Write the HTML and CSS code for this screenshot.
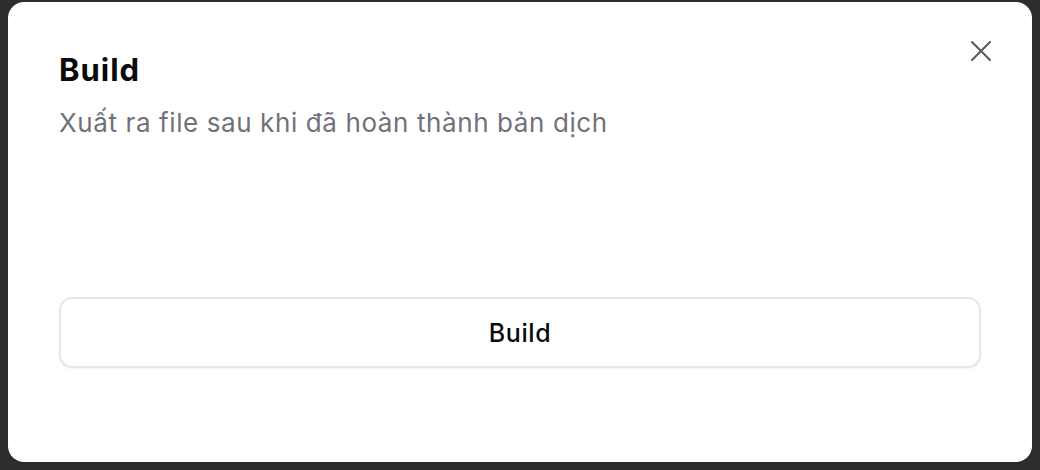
FILE: index.html
```html
<!DOCTYPE html>
<html lang="vi">
<head>
<meta charset="utf-8">
<link rel="stylesheet" href="styles.css">
</head>
<body>
<div class="modal">
  <button class="close" aria-label="Close">
    <svg width="24" height="24" viewBox="0 0 24 24" fill="none" stroke="currentColor" stroke-width="2" stroke-linecap="round"><path d="M3 3L21 21M21 3L3 21"/></svg>
  </button>
  <h2 class="title">Build</h2>
  <p class="desc">Xuất ra file sau khi đã hoàn thành bản dịch</p>
  <button class="build">Build</button>
</div>
</body>
</html>
```
FILE: styles.css
```css
html, body { margin: 0; padding: 0; }
body {
  background: #2e2e2e;
  width: 1040px;
  height: 470px;
  font-family: Inter, "Noto Sans", sans-serif;
  padding: 2px 8px 0 8px;
  box-sizing: border-box;
}
.modal {
  position: relative;
  width: 1024px;
  height: 460px;
  background: #ffffff;
  border-radius: 16px;
  box-sizing: border-box;
  padding: 48px 51px 0 51px;
  display: flex;
  flex-direction: column;
  box-shadow: 0 1px 2px rgba(0,0,0,0.2);
}
.close {
  position: absolute;
  top: 37px;
  right: 39px;
  width: 24px;
  height: 24px;
  padding: 0;
  border: none;
  background: none;
  color: #58585c;
  display: flex;
}
.title {
  margin: 0;
  font-size: 31px;
  font-weight: 700;
  line-height: 40px;
  color: #0a0a0a;
  letter-spacing: 1px;
}
.desc {
  margin: 17px 0 0 0;
  font-size: 26px;
  line-height: 32px;
  color: #71717a;
  letter-spacing: 0.6px;
}
.build {
  margin-top: 158px;
  height: 71px;
  width: 100%;
  border: 2px solid #e6e6e8;
  border-radius: 13px;
  background: #fff;
  font-family: inherit;
  font-size: 25px;
  font-weight: 500;
  letter-spacing: 0.6px;
  color: #0a0a0a;
  box-shadow: 0 1px 2px rgba(0,0,0,0.05);
}
```
